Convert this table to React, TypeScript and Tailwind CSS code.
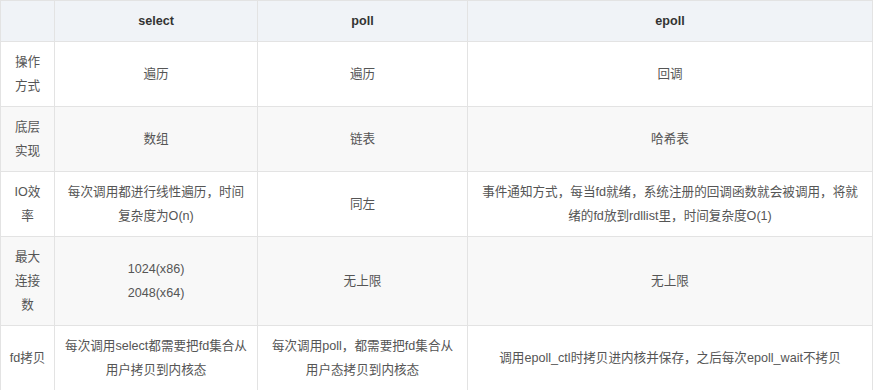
import React from "react";

const rows: { label: React.ReactNode; a: React.ReactNode; b: React.ReactNode; c: React.ReactNode; bg: string }[] = [
  { label: <>操作<br />方式</>, a: "遍历", b: "遍历", c: "回调", bg: "bg-white" },
  { label: <>底层<br />实现</>, a: "数组", b: "链表", c: "哈希表", bg: "bg-[#f8f8f8]" },
  {
    label: <>IO效<br />率</>,
    a: <>每次调用都进行线性遍历，时间<br />复杂度为O(n)</>,
    b: "同左",
    c: <>事件通知方式，每当fd就绪，系统注册的回调函数就会被调用，将就<br />绪的fd放到rdllist里，时间复杂度O(1)</>,
    bg: "bg-white",
  },
  {
    label: <>最大<br />连接<br />数</>,
    a: <>1024(x86)<br />2048(x64)</>,
    b: "无上限",
    c: "无上限",
    bg: "bg-[#f8f8f8]",
  },
  {
    label: "fd拷贝",
    a: <>每次调用select都需要把fd集合从<br />用户拷贝到内核态</>,
    b: <>每次调用poll，都需要把fd集合从<br />用户态拷贝到内核态</>,
    c: "调用epoll_ctl时拷贝进内核并保存，之后每次epoll_wait不拷贝",
    bg: "bg-white",
  },
];

export default function App() {
  const font = { fontFamily: '"Liberation Sans", "Noto Sans CJK SC", sans-serif' };
  const td = "border border-[#e3e3e3] px-1 py-2 text-center align-middle whitespace-nowrap";
  return (
    <div className="w-[873px] h-[390px] overflow-hidden bg-white" style={font}>
      <table className="w-[873px] table-fixed border-collapse text-[12.6px] leading-[24px] text-[#555]">
        <colgroup>
          <col className="w-[54px]" />
          <col className="w-[203px]" />
          <col className="w-[210px]" />
          <col />
        </colgroup>
        <thead>
          <tr className="bg-[#f0f3f7] h-[41px]">
            <th className={td}></th>
            <th className={`${td} font-bold text-[#333]`}>select</th>
            <th className={`${td} font-bold text-[#333]`}>poll</th>
            <th className={`${td} font-bold text-[#333]`}>epoll</th>
          </tr>
        </thead>
        <tbody>
          {rows.map((r, i) => (
            <tr key={i} className={r.bg}>
              <td className={td}>{r.label}</td>
              <td className={td}>{r.a}</td>
              <td className={td}>{r.b}</td>
              <td className={td}>{r.c}</td>
            </tr>
          ))}
        </tbody>
      </table>
    </div>
  );
}
